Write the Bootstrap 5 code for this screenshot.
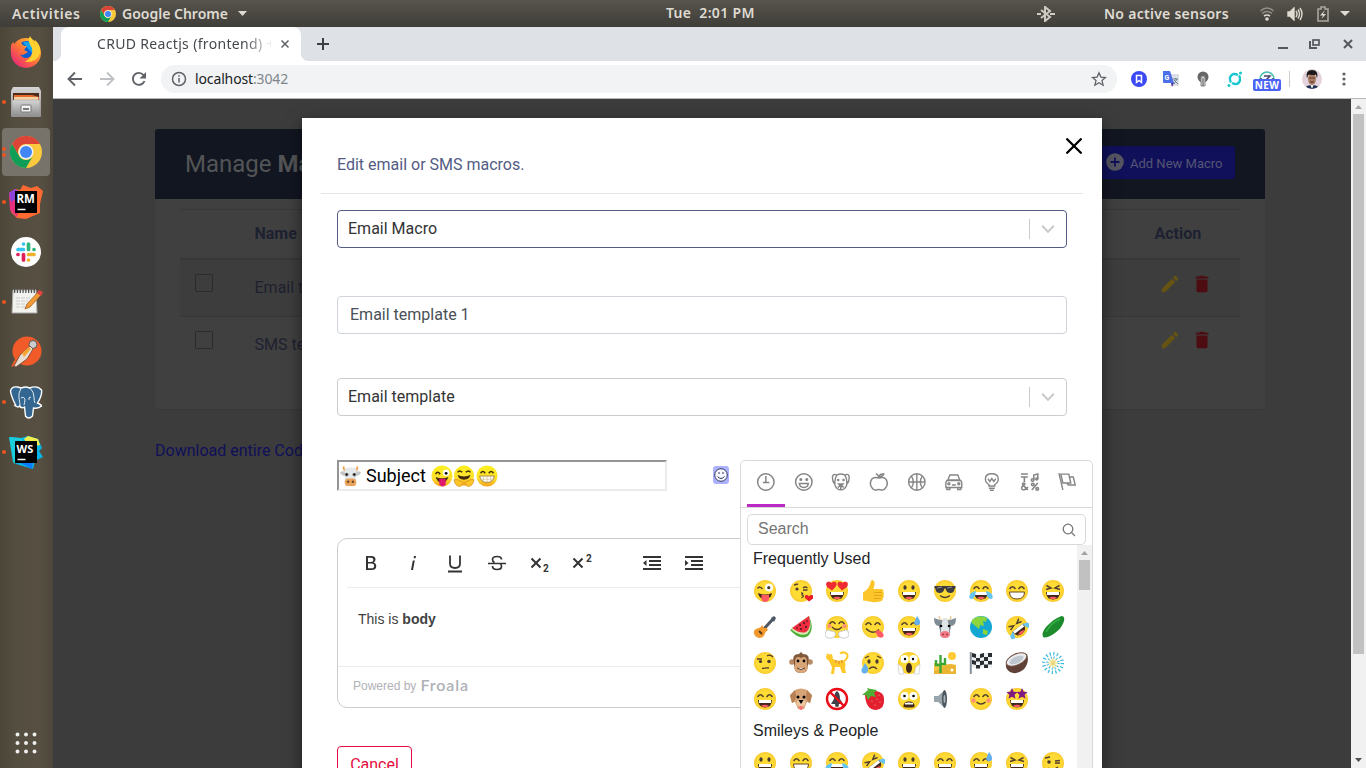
<!DOCTYPE html>
<html lang="en">
<head>
<meta charset="utf-8">
<meta name="viewport" content="width=device-width, initial-scale=1">
<title>CRUD Reactjs (frontend)</title>
<link href="https://cdn.jsdelivr.net/npm/bootstrap@5.3.0/dist/css/bootstrap.min.css" rel="stylesheet">
<style>
html,body{height:768px;overflow:hidden}
body{width:1366px;font-family:Roboto,"Liberation Sans",sans-serif;font-size:16px;line-height:24px}
svg{display:block;flex:none}
/* desktop bar */
.topbar{height:27px;background:linear-gradient(#57544c,#3f3d38);color:#dfdbd2;font:600 14px/27px "Noto Sans",sans-serif;padding-right:16px}
.topbar span{white-space:nowrap}
.topbar .clock{left:666px;top:-1px;letter-spacing:.33px}
/* dock */
.dock{width:53px;background:linear-gradient(90deg,#4b4639,#544e40 30%,#564f42 75%,#4d473b);padding-right:1px}
.dock-item{height:50px;flex:none}
.dock-item.current::before{content:"";position:absolute;left:2px;top:1px;width:48px;height:48px;border-radius:4px;background:#77736a}
.dock-item svg{position:relative}
.pip{position:absolute;left:2px;top:23px;width:4px;height:4px;border-radius:2px;background:#e95420}
.pip.two{top:20px;box-shadow:0 6px #e95420}
/* browser frame */
.tabstrip{height:34px;background:#dee1e6;padding-left:8px;font-family:"Noto Sans",sans-serif}
.browser-tab{width:240px;background:#fff;border-radius:8px 8px 0 0;padding-left:36px}
.browser-tab::before,.browser-tab::after{content:"";position:absolute;bottom:0;width:8px;height:8px}
.browser-tab::before{left:-8px;background:radial-gradient(circle at 0 0,transparent 8px,#fff 8.5px)}
.browser-tab::after{right:-8px;background:radial-gradient(circle at 100% 0,transparent 8px,#fff 8.5px)}
.tab-title{width:176px;font-size:14px;letter-spacing:.33px;color:#45484c;white-space:nowrap;overflow:hidden;-webkit-mask-image:linear-gradient(90deg,#000 84%,transparent)}
.toolbar{height:38px;border-bottom:1px solid #b6b8b8;background:#fff;padding:0 0 1px 14px}
.omnibox{width:956px;height:28px;border-radius:14px;background:#f1f3f4;font:14px/28px "Noto Sans",sans-serif;letter-spacing:-.13px;color:#202124;padding:0 10px}
.omnibox .port{color:#80868b}
.ext{width:32px}
.newtag{left:-6px;top:8px;width:28px;height:12px;border-radius:2px;background:#4a63f5;color:#fff;font:700 10px/12px "Noto Sans",sans-serif;letter-spacing:.3px;text-align:center}
/* dimmed page */
.page{background:#3c3c3c;color:#1d2130}
.sheet{width:1110px;height:280px;margin:30px 0 0 102px;background:#404040;border-radius:3px;overflow:hidden;box-shadow:0 1px 1px #383838}
.sheet-head{height:70px;background:#121621;color:#535456;font-size:24px;padding:0 30px}
.add-btn{width:140px;height:33px;background:#10105a;border-radius:2px;color:#555575;font-size:13px;padding-left:11px;gap:6px;margin-top:-4px}
.macro-rows{margin:10px 25px 0;border-top:1px solid #383838}
.macro-row{height:57px;border-bottom:1px solid #373737}
.macro-row:last-child{border:0}
.macro-row:last-child>div{margin-top:-2px}
.macro-row.odd{background:#3d3d3d}
.macro-row.heads{height:50px;border-bottom:2px solid #373737;font-weight:700}
.c-check{width:74.5px;padding-left:15px}
.c-act{width:85.5px}
.tick{width:18px;height:18px;border:1px solid #2b2b2b;border-radius:2px;margin-top:-10px}
.pens{padding:0 0 9px 4px;gap:10px}
.dl{margin:30px 0 0 102px;color:#10105a}
.vscroll{width:15px;background:#f1f1f1}
.vscroll .thumb{width:11px;background:#c1c1c1}
/* dialog */
.dialog-box{left:249px;top:19px;width:800px;height:660px;background:#fff;box-shadow:0 5px 15px rgba(0,0,0,.5);padding:0 35px}
.dialog-top{height:76px;margin:0 -16px;padding:0 16px;border-bottom:1px solid #e5e5e5;color:#535b85}
.field{height:38px;border:1px solid #ccc;border-radius:4px;padding-left:10px;color:#333;background:#fff}
.field.focused{border-color:#535b85}
.field.plain{border-color:#ced4da;color:#495057;padding-left:12px}
.field .sep{width:1px;height:20px;background:#ccc}
.subject{width:330px;height:31px;border:2px solid;border-color:#949494 #ebebeb #ebebeb #949494;font-size:18px;color:#000;padding-left:1px}
.picker-btn{width:16px;height:18px;background:#adb2ff;border-radius:3px;margin:-2px 0 0 46px}
.editor{height:170px;border:1px solid #ccc;border-radius:10px;margin-top:47px}
.ed-tools{height:49px;border-bottom:1px solid #ececec;margin:0 9px;padding-left:3px;color:#333}
.ed-tools svg{width:42px;height:24px}
.ed-body{height:79px;border-bottom:1px solid #ececec;font:14px/20px "Liberation Sans",sans-serif;color:#414141;padding:21px 20px}
.ed-foot{padding:5px 15px;color:#b0b1b7;font:12px/28px "Liberation Sans",sans-serif}
.froala{font:600 16px/26px Lato,sans-serif;letter-spacing:.9px}
.cancel{width:75px;height:38px;border:1px solid #e60b41;border-radius:4px;color:#e60b41;margin-top:38px;padding-top:6px;text-align:center}
/* emoji picker */
.picker{left:438px;top:342px;width:353px;height:340px;background:#fff;border:1px solid #d9d9d9;border-radius:5px;font-family:"Liberation Sans",sans-serif;color:#222427}
.anchors{height:47px;border-bottom:1px solid #d9d9d9;padding:0 6px;color:#858585}
.anchors svg{width:37.66px;height:42px}
.anchors .bar{left:6px;top:43px;width:38px;height:3px;background:#bb2ac5}
.find{height:31px;margin:6px 6px 0;border:1px solid #d9d9d9;border-radius:5px;padding:0 8px 1px 10px;color:#757575}
.emoji-grid{width:330px;padding-left:6px;line-height:20px}
.cat-name{height:28px;padding:4px 0 0 6px;font-size:16px}
.cells{display:grid;grid-template-columns:repeat(9,36px);grid-auto-rows:36px;place-items:center}
.cells svg{width:24px;height:24px}
</style>
</head>
<body class="d-flex flex-column">

<svg width="0" height="0" class="position-absolute">
<defs>
<radialGradient id="gy"><stop offset=".7" stop-color="#ffdb36"/><stop offset="1" stop-color="#f8cb2e"/></radialGradient>
<linearGradient id="gn" x2="0" y2="1"><stop stop-color="#fdf01a"/><stop offset=".6" stop-color="#fde030"/><stop offset="1" stop-color="#f5a11c"/></linearGradient>
<linearGradient id="gf" x1="1" x2="0" y2="1"><stop stop-color="#ffe226"/><stop offset=".5" stop-color="#ff7139"/><stop offset="1" stop-color="#e31587"/></linearGradient>
<linearGradient id="gg" x2="0" y2="1"><stop stop-color="#d5d5d5"/><stop offset="1" stop-color="#8f8f8f"/></linearGradient>
<symbol id="face" viewBox="0 0 24 24"><circle cx="12" cy="12" r="11" fill="url(#gy)"/></symbol>
<symbol id="dots" viewBox="0 0 24 24"><g fill="#4a3b2e"><ellipse cx="8" cy="8.500" rx="1.600" ry="2.200"/><ellipse cx="16" cy="8.500" rx="1.600" ry="2.200"/></g></symbol>
<symbol id="arcs" viewBox="0 0 24 24"><path d="M5 9.500q2.500-3.500 5 0M14 9.500q2.500-3.500 5 0" fill="none" stroke="#54402c" stroke-width="1.600" stroke-linecap="round"/></symbol>
<symbol id="grin" viewBox="0 0 24 24"><path d="M5 13h14q-.3 7.500-7 7.500T5 13z" fill="#40281c"/><path d="M6 13h12v3H6z" fill="#fff"/><path d="M8 18.800q4-2.200 8 0-4 3-8 0z" fill="#ff5a62"/></symbol>
<symbol id="e-grin" viewBox="0 0 24 24"><use href="#face"/><use href="#dots"/><use href="#grin"/></symbol>
<symbol id="e-smile" viewBox="0 0 24 24"><use href="#face"/><use href="#arcs"/><use href="#grin"/></symbol>
<symbol id="e-teeth" viewBox="0 0 24 24"><use href="#face"/><use href="#arcs"/><path d="M4.500 13h15q0 7-7.500 7t-7.500-7z" fill="#fff" stroke="#6b481f"/></symbol>
<symbol id="squint" viewBox="0 0 24 24"><path d="M5.500 6.500l4.500 2.500-5 1.500M18.500 6.500L14 9l5 1.500" fill="none" stroke="#54402c" stroke-width="1.500"/></symbol>
<symbol id="e-xd" viewBox="0 0 24 24"><use href="#face"/><use href="#squint"/><use href="#grin"/></symbol>
<symbol id="e-sweat" viewBox="0 0 24 24"><use href="#face"/><use href="#arcs"/><use href="#grin"/><path d="M20 1q4 5 3 7.500t-4 1.500q-3-1-1-4.500z" fill="#65b1ef"/></symbol>
<symbol id="e-joy" viewBox="0 0 24 24"><use href="#face"/><use href="#arcs"/><use href="#grin"/><path d="M7 12q-1 8-4.500 8T1 15.500Q2.500 13 7 12zM17 12q1 8 4.500 8t1.500-4.500Q21.500 13 17 12z" fill="#65c5f2"/></symbol>
<symbol id="e-rofl" viewBox="0 0 24 24"><g transform="rotate(-38 12 12)"><use href="#face"/><use href="#squint"/><use href="#grin"/><path d="M6 13q-1 7-4 7t-1-5zM18 13q1 7 4 7t1-5z" fill="#65c5f2"/></g></symbol>
<symbol id="e-zany" viewBox="0 0 24 24"><use href="#face"/><path d="M4.500 9.500q2.500-3 5 .5" fill="none" stroke="#54402c" stroke-width="1.500"/><circle cx="16" cy="8.500" r="4" fill="#fff"/><circle cx="15.800" cy="8.700" r="1.600" fill="#4a3b2e"/><path d="M5 14q7 3 14 0-1 6-7 6t-7-6z" fill="#40281c"/><path d="M8.500 15.500q4 1 7.500 0v4.500q-.5 3-4 3t-3.500-3z" fill="#ff5a62"/></symbol>
<symbol id="e-kiss" viewBox="0 0 24 24"><use href="#face"/><circle cx="8" cy="10" r="1.600" fill="#4a3b2e"/><path d="M5 6l4-1M14 9q2-2 4.500 0M14 11h4.500M12 14q3 0 1 2 3 1-.5 3" fill="none" stroke="#54402c" stroke-width="1.300"/><path d="M20 22.500l-4-3.500q-1-3.500 2-3 1.500.3 2 1.500 1-2 3-1.500t1 3.500z" fill="#e81b26"/></symbol>
<symbol id="e-love" viewBox="0 0 24 24"><use href="#face"/><use href="#grin"/><g fill="#ee2b33"><path d="M7 11.500L2 8Q-.5 3.500 3.500 2.500q2 0 3 1.500Q8 2 10.500 3q2.500 2-.5 5.500z"/><path d="M17 11.500L22 8Q24.500 3.500 20.500 2.500q-2 0-3 1.500Q16 2 13.500 3q-2.500 2 .5 5.500z"/></g></symbol>
<symbol id="e-thumb" viewBox="0 0 24 24"><path d="M2 13q6-2 8-11 1-2 3 0 1.500 2-.5 8h8q3 .5 1.500 3 2 1.500.500 3 1 2-.500 3 0 3-3 3.500-7 1.500-13-.500l-4-.500z" fill="#fcc62b"/><path d="M13 13.500h8M13 16.500h8M13 19.500h7" stroke="#dd9f17" stroke-width=".8"/></symbol>
<symbol id="e-cool" viewBox="0 0 24 24"><use href="#face"/><path d="M1.500 7h21v2l-1 1q-.5 4-4 4-4 0-5-4.500h-1Q10.500 14 6.500 14q-3.500 0-4-4l-1-1z" fill="#3b3b40"/><path d="M4 9l5-1M14 9l5-1" stroke="#8c8c92"/><path d="M7 16.500q5 4 10 0" fill="none" stroke="#54402c" stroke-width="1.400"/></symbol>
<symbol id="e-guitar" viewBox="0 0 24 24"><path d="M10 15L20 4" stroke="#4e5964" stroke-width="3"/><path d="M18 3l3-2 2 2-2 4z" fill="#4e5964"/><path d="M9 10q-1 3-5 3.500Q0 15 1 19q2 4 6 4 4-.5 5-4.500 0-2 3-3.500-1-3-4-2z" fill="#f29a2e"/><path d="M6 16l3 3" stroke="#5a3a1a" stroke-width="2"/></symbol>
<symbol id="e-melon" viewBox="0 0 24 24"><path d="M20 1q6 13-1 20-8 5-18-6z" fill="#4caf3a"/><path d="M20 1q4 13-2 18-7 3-16-5z" fill="#d8eab0"/><path d="M20 1q3 12-3 16-6 2-14-4z" fill="#ef2c40"/><g fill="#3b1a1a"><circle cx="11" cy="10" r="1"/><circle cx="15" cy="8" r="1"/><circle cx="17" cy="12" r="1"/><circle cx="12" cy="14" r="1"/><circle cx="18" cy="6" r=".8"/><circle cx="8" cy="13" r=".8"/></g></symbol>
<symbol id="e-hug" viewBox="0 0 24 24"><use href="#face"/><use href="#arcs" y="-1"/><path d="M7 12q5 5 10 0" fill="none" stroke="#54402c" stroke-width="1.400"/><circle cx="4.500" cy="11" r="2" fill="#ff8d7a"/><circle cx="19.500" cy="11" r="2" fill="#ff8d7a"/><g fill="#fff" stroke="#b9c0c4" stroke-width=".8"><path d="M1 16q2-2 5 0 5 0 4.500 4-2 4-7 3T1 16zM23 16q-2-2-5 0-5 0-4.500 4 2 4 7 3t2.500-7z"/></g></symbol>
<symbol id="e-yum" viewBox="0 0 24 24"><use href="#face"/><use href="#arcs"/><path d="M5 13.500q7 7 13 1" fill="none" stroke="#54402c" stroke-width="1.400"/><path d="M14 17q3-3 6-.5 3 2 2.500 5-2 2-5 .5z" fill="#ff5a62"/></symbol>
<symbol id="e-cow" viewBox="0 0 24 24"><path d="M1 3l6 2 10 0 6-2q0 8-5 8l-2 10q-4 4-8 0L6 11Q1 11 1 3z" fill="#7f8b95"/><path d="M10 3h4l2 8v8H8v-8z" fill="#dfe4e7"/><path d="M6.500 1q-1 3 2 4M17.500 1q1 3-2 4" fill="none" stroke="#e8ca9a" stroke-width="1.500"/><circle cx="8" cy="11" r="1.300"/><circle cx="16" cy="11" r="1.300"/><ellipse cx="12" cy="19.500" rx="5" ry="3.500" fill="#f47b86"/><circle cx="10" cy="19.500" r="1" fill="#a23a50"/><circle cx="14" cy="19.500" r="1" fill="#a23a50"/></symbol>
<symbol id="e-globe" viewBox="0 0 24 24"><circle cx="12" cy="12" r="11" fill="#14a7d1"/><path d="M4 4q7-5 14-1l-1 4-3-1 1 5-4-1-1 4-6-5Q1 7 4 4zM14 14l5 2-1 4-4-1zM17 9l2 3" fill="#8bd63c"/></symbol>
<symbol id="e-cuke" viewBox="0 0 24 24"><path d="M20.500 1q3.500 0 2.500 5-2 7-9 12T2.500 22.500Q-.5 18 6 11 14 3 20.500 1z" fill="#1d8a2e"/><path d="M19 4Q10 8 5 17" stroke="#35b044" stroke-width="1.500" fill="none"/></symbol>
<symbol id="e-brow" viewBox="0 0 24 24"><use href="#face"/><path d="M4 8h5M14 5q3-2 6 1M9 17.500q4-1 7-.5" fill="none" stroke="#54402c" stroke-width="1.300"/><circle cx="7.500" cy="10.500" r="1.600" fill="#4a3b2e"/><circle cx="16" cy="10.500" r="1.800" fill="#4a3b2e"/></symbol>
<symbol id="e-monkey" viewBox="0 0 24 24"><circle cx="3" cy="11" r="2.800" fill="#b98a63"/><circle cx="21" cy="11" r="2.800" fill="#b98a63"/><path d="M5 12Q2 3 10 3l2-2 2 2q8 0 5 9 1 10-7 10T5 12z" fill="#80593d"/><path d="M12 7q5-3 6 3-1 3 1 6-1 6-7 6t-7-6q2-3 1-6 1-6 6-3z" fill="#d9a67a"/><circle cx="9" cy="10" r="1.400"/><circle cx="15" cy="10" r="1.400"/><path d="M8 17q4 3 8 0" stroke="#53331f" fill="#fff"/></symbol>
<symbol id="e-cat" viewBox="0 0 24 24"><path d="M2 2l2 1.500 3-.5 1 5q5 3 9 1l3 2q1 3 0 6l1 5h-4l-2-6-5 0-1 7H6l1-7-3-6-3-3z" fill="#ffc92c"/><path d="M18 11q6-4 4-8-3-3-7-.5" fill="none" stroke="#ffc92c" stroke-width="2"/><path d="M11 9v3M14 10v3M17 9v3" stroke="#df7e25"/></symbol>
<symbol id="e-sad" viewBox="0 0 24 24"><use href="#face"/><use href="#dots" y="2"/><path d="M4 7l4-2M20 7l-4-2M8 18q4-4 8 0" fill="none" stroke="#54402c" stroke-width="1.300"/><path d="M4 12q4 5 3 8t-4 2.500-2.500-4z" fill="#65b1ef"/></symbol>
<symbol id="e-scream" viewBox="0 0 24 24"><use href="#face"/><circle cx="7.500" cy="8" r="4" fill="#fff"/><circle cx="16.500" cy="8" r="4" fill="#fff"/><circle cx="8" cy="8" r="1.200"/><circle cx="16" cy="8" r="1.200"/><ellipse cx="12" cy="17" rx="3" ry="5" fill="#40281c"/><path d="M1 13l4 3 2 7H2zM23 13l-4 3-2 7h5z" fill="#fff" stroke="#c5cbd0" stroke-width=".7"/></symbol>
<symbol id="e-desert" viewBox="0 0 24 24"><path d="M1 12l22 2v9H1z" fill="#f6c644"/><path d="M10 16l7-3 6 1v9H1v-3z" fill="#e9b532"/><circle cx="19" cy="5" r="4" fill="#ffcb33"/><path d="M7.500 22V4M3 9v5h4M12 7v6H8" stroke="#3ba735" stroke-width="2.400" fill="none"/><circle cx="19" cy="19" r="1.500" fill="#fff"/></symbol>
<symbol id="e-flag" viewBox="0 0 24 24"><path d="M1.800 1v22" stroke="#87919a" stroke-width="2"/><path d="M3 2q7 3 10 1t10 0v14q-7-2-10 0T3 16z" fill="#eef1f2"/><g fill="#292c30"><path d="M3 2l4 1v4L3 6zM11 3l4-1v4l-4 1zM19 2h4v4h-4zM7 7l4 0v3.500H7zM15 6l4 0v4h-4zM3 9l4 1v4l-4-1zM11 10l4-.5v4l-4 1zM19 10h4v3.500h-4zM7 14l4 0v3.500H7zM15 13.500h4V17h-4z"/></g></symbol>
<symbol id="e-coco" viewBox="0 0 24 24"><path d="M1 13Q8 2 22 3q3 9-4 16-7 5-13 2-5-3-4-8z" fill="#5f4138"/><ellipse cx="11.500" cy="8.500" rx="11" ry="5.500" transform="rotate(-25 11.500 8.500)" fill="#e8eaee" stroke="#745244"/><ellipse cx="11.500" cy="9" rx="7.500" ry="3.300" transform="rotate(-25 11.500 9)" fill="#bec6ce"/></symbol>
<symbol id="e-spark" viewBox="0 0 24 24"><g fill="none" stroke="#3bbbdd"><circle cx="12" cy="12" r="9.300" stroke-width="3.400" stroke-dasharray="1.200 2.450"/><circle cx="12" cy="12" r="5.500" stroke-width="2.400" stroke-dasharray="1 1.880"/></g><path d="M12 7v10M7 12h10M8.500 8.500l7 7M15.500 8.500l-7 7" stroke="#ead877" stroke-width="1.200"/></symbol>
<symbol id="e-dog" viewBox="0 0 24 24"><path d="M6 3q6-3 12 0l5 6-2 7-3-1-3 7H9l-3-7-3 1-2-7z" fill="#d6a477"/><path d="M6 3L1 8l2 8q4-2 4-8zM18 3l5 5-2 8q-4-2-4-8z" fill="#b78055"/><circle cx="9" cy="10" r="1.500"/><circle cx="15" cy="10" r="1.500"/><ellipse cx="12" cy="16" rx="4.500" ry="3.500" fill="#ebc6a1"/><path d="M9.500 13h5L12 17z"/><ellipse cx="12" cy="21" rx="2" ry="2" fill="#ff6f75"/></symbol>
<symbol id="e-mute" viewBox="0 0 24 24"><circle cx="12" cy="12" r="10" fill="#fff" stroke="#e90d18" stroke-width="2.400"/><path d="M12 4q3 2 3 8l3 5H6l3-5q0-6 3-8z" fill="#3f4347"/><circle cx="12" cy="18" r="2" fill="#3f4347"/><path d="M5 5l14 14" stroke="#e90d18" stroke-width="2.400"/></symbol>
<symbol id="e-berry" viewBox="0 0 24 24"><path d="M4 8q4-6 11-4 8 1 8 8 1 10-8 11Q5 23 4 8z" fill="#e3202f"/><path d="M1 8l6-5-1-2 4 1 6 1-3 3 2 4-5-1-3 4-2-5z" fill="#4fae35"/><g fill="#ffb4a5"><circle cx="11" cy="14" r=".6"/><circle cx="16" cy="12" r=".6"/><circle cx="14" cy="18" r=".6"/><circle cx="19" cy="15" r=".6"/><circle cx="18" cy="8" r=".6"/></g></symbol>
<symbol id="e-grim" viewBox="0 0 24 24"><use href="#face"/><circle cx="7.500" cy="9" r="4" fill="#fff"/><circle cx="16.500" cy="9" r="4" fill="#fff"/><circle cx="7.500" cy="9" r="1.300"/><circle cx="16.500" cy="9" r="1.300"/><path d="M6.500 20q-.5-5.500 5.500-5.500t5.500 5.500q-5.500 1-11 0z" fill="#40281c"/><path d="M8 16q4-1 8 0v1.500H8z" fill="#fff"/></symbol>
<symbol id="e-speak" viewBox="0 0 24 24"><path d="M1 9h4l7-6v18l-7-6H1z" fill="#98a5ad"/><ellipse cx="11.500" cy="12" rx="2.500" ry="9" fill="#4d565e"/><ellipse cx="11.500" cy="12" rx="1" ry="4" fill="#aab4bb"/></symbol>
<symbol id="e-blush" viewBox="0 0 24 24"><use href="#face"/><use href="#arcs"/><circle cx="4.500" cy="13.500" r="2.200" fill="#ff9075"/><circle cx="19.500" cy="13.500" r="2.200" fill="#ff9075"/><path d="M7.500 15q4.500 4 9 0" fill="none" stroke="#54402c" stroke-width="1.500"/></symbol>
<symbol id="e-star" viewBox="0 0 24 24"><use href="#face"/><use href="#grin"/><path id="st" d="M7 1l1.600 3.700 4 .3-3 2.700.9 4L7 9.700l-3.500 2 .9-4-3-2.700 4-.3z" fill="#801a83"/><use href="#st" x="10"/></symbol>
<symbol id="e-wink" viewBox="0 0 24 24"><use href="#face"/><circle cx="8" cy="11" r="1.800" fill="#4a3b2e"/><path d="M4 7l5-1M14 10l5-.5M14 12h5M7 17q5 3 10-1" fill="none" stroke="#54402c" stroke-width="1.300"/></symbol>
<symbol id="i-chrome" viewBox="0 0 32 32"><circle cx="16" cy="16" r="16" fill="#fbc93d"/><path d="M2.100 8A16 16 0 0 1 29.900 8H16a8 8 0 0 0-7 12z" fill="#db4437"/><path d="M2.100 8l7 12A8 8 0 0 0 22.900 20L16 32A16 16 0 0 1 2.100 8z" fill="#0f9d58"/><circle cx="16" cy="16" r="7.500" fill="#f1f1f1"/><circle cx="16" cy="16" r="6" fill="#4285f4"/></symbol>
<symbol id="i-pencil" viewBox="0 0 24 24"><path d="M3 17.250V21h3.750L17.810 9.940l-3.750-3.750L3 17.250zM20.710 7.040a1 1 0 0 0 0-1.410l-2.340-2.340a1 1 0 0 0-1.410 0l-1.830 1.830 3.750 3.750 1.830-1.830z"/></symbol>
<symbol id="i-bin" viewBox="0 0 24 24"><path d="M6 19a2 2 0 0 0 2 2h8a2 2 0 0 0 2-2V7H6v12zM19 4h-3.500l-1-1h-5l-1 1H5v2h14V4z"/></symbol>
<symbol id="i-down" viewBox="0 0 20 20"><path d="M4.800 7.500L10 12.700l5.200-5.200" fill="none" stroke="#ccc" stroke-width="2.200" stroke-linecap="round"/></symbol>
</defs>
</svg>

<header class="topbar d-flex align-items-center position-relative flex-shrink-0">
  <span style="margin-left:12px;width:68px;letter-spacing:.62px">Activities</span>
  <svg width="16" height="16" style="margin-left:20px"><use href="#i-chrome"/></svg>
  <span style="margin-left:6px;width:111px">Google Chrome</span>
  <svg width="9" height="5" style="margin-left:5px"><path d="M0 0h9L4.500 5z" fill="#dfdbd2"/></svg>
  <span class="clock position-absolute">Tue&nbsp; 2:01 PM</span>
  <svg width="18" height="16" class="ms-auto" viewBox="0 0 18 16" fill="none" stroke="#cfcbc3" stroke-width="2"><path d="M4 4l9 7-5 4V1l5 4-9 7M0 8h4M13 8h5"/></svg>
  <span style="margin-left:49px;width:126px;letter-spacing:.27px">No active sensors</span>
  <svg width="16" height="14" style="margin-left:29px" viewBox="0 0 16 14" fill="none" stroke-width="1.600"><path d="M1.500 4Q8-2 14.500 4M3 6.500q5-4 10 0" stroke="#918e87"/><path d="M5 9q3-2 6 0" stroke="#dfdbd2"/><circle cx="8" cy="12" r="1.800" fill="#dfdbd2"/></svg>
  <svg width="16" height="14" style="margin-left:12px" viewBox="0 0 16 14" fill="none" stroke="#dfdbd2" stroke-width="1.400"><path d="M1 5h2l4-4v12L3 9H1z" fill="#dfdbd2"/><path d="M9 4q2 3 0 6M11 2.500q3 4.500 0 9M13 1q4 6 0 12"/></svg>
  <svg width="12" height="16" style="margin-left:14px" viewBox="0 0 12 16"><path d="M4 1h4v2h3v12H1V3h3z" fill="none" stroke="#aaa69e" stroke-width="1.600"/><path d="M8 4L3 9.500h3L4.500 13 9 8H6z" fill="#dfdbd2"/></svg>
  <svg width="10" height="5" style="margin-left:11px"><path d="M0 0h10L5 5z" fill="#dfdbd2"/></svg>
</header>

<div class="d-flex flex-grow-1">
  <nav class="dock d-flex flex-column position-relative">
    <div class="dock-item position-relative d-flex align-items-center justify-content-center">
      <svg width="32" height="32" viewBox="0 0 32 32"><circle cx="16" cy="17" r="15" fill="url(#gf)"/><circle cx="16.500" cy="14.500" r="9.500" fill="#0a5ed0"/><path d="M13 7q4-3 9 1 3 4 0 9z" fill="#10a4f0"/><path d="M1 9q-1 8 2 13 4 9 13 9 14-1 14-15l-8 2q-2 4-6 4-4 0-6-4 2 2 5 0l3-2-4-2 3-4q-4 0-5-2L9 4Q6 7 5 9L3 6z" fill="url(#gf)"/><path d="M20 0q-3 5 2 12 2 9-7 14 12 1 15-9 1-8-5-13v4z" fill="#ffd030"/></svg>
    </div>
    <div class="dock-item position-relative d-flex align-items-center justify-content-center"><i class="pip"></i>
      <svg width="32" height="32" viewBox="0 0 32 32"><path d="M3 1h26l2 4v25q0 1-1 1H2q-1 0-1-1V5z" fill="url(#gg)"/><path d="M3 7h26v7H3z" fill="#4d2b1c"/><path d="M4 9h18l7 2v4H4z" fill="#e36b2f"/><path d="M4 11h24v3H4z" fill="#f4d3a4"/><path d="M2 14h28v16H2z" fill="url(#gg)" stroke="#999" stroke-width=".5"/><rect x="11" y="19" width="10" height="7" rx="1" fill="#f3f3f3" stroke="#777"/><path d="M13 23h6" stroke="#777" stroke-width="2"/></svg>
    </div>
    <div class="dock-item current position-relative d-flex align-items-center justify-content-center"><i class="pip two"></i>
      <svg width="32" height="32"><use href="#i-chrome"/></svg>
    </div>
    <div class="dock-item position-relative d-flex align-items-center justify-content-center"><i class="pip"></i>
      <svg width="34" height="34" viewBox="0 0 34 34"><path d="M0 8l6-4 5 1 3-5 8 3 6-2 6 5-3 13 0 9-14 6-9-1-6-6z" fill="#ff6a33"/><path d="M0 8l6-4 6 6-4 22-7-7z" fill="#e8307f"/><path d="M0 8l6-4 8 5-12 8z" fill="#8b43d9"/><rect x="6" y="6" width="22" height="22" fill="#000"/><text x="7.500" y="18" font-family="Open Sans" font-weight="700" font-size="11.500" fill="#fff">RM</text><path d="M8.500 24.500h8" stroke="#fff" stroke-width="1.500"/></svg>
    </div>
    <div class="dock-item position-relative d-flex align-items-center justify-content-center">
      <svg width="30" height="30" viewBox="0 0 30 30"><circle cx="15" cy="15" r="15" fill="#fff"/><g stroke-width="3.700" stroke-linecap="round"><path d="M12.500 7v0M7 12.500h5.500" stroke="#36c5f0"/><path d="M17.500 7v5.500M23 12.500v0" stroke="#2eb67d"/><path d="M17.500 17.500H23M17.500 23v0" stroke="#ecb22e"/><path d="M12.500 17.500V23M7 17.500v0" stroke="#e01e5a"/></g></svg>
    </div>
    <div class="dock-item position-relative d-flex align-items-center justify-content-center"><i class="pip"></i>
      <svg width="34" height="30" viewBox="0 0 34 30"><path d="M4 3h23l1 23H3z" fill="#f2f2ee" stroke="#aaa"/><path d="M5 4h21" stroke="#555" stroke-width="4" stroke-dasharray="1.300 1.500"/><path d="M7 11h15M7 14h12M7 17h9M7 20h9" stroke="#ccc" stroke-dasharray="4 1"/><path d="M16 22l2-5L30 4l3 3-12 13z" fill="#f39a35" stroke="#9c5417" stroke-width=".7"/><path d="M28 6l2-3 4 2-2 4z" fill="#df4343"/></svg>
    </div>
    <div class="dock-item position-relative d-flex align-items-center justify-content-center">
      <svg width="32" height="32" viewBox="0 0 32 32"><circle cx="17" cy="15" r="14.500" fill="#f15a29"/><path d="M1 31l4-8 5 5z" fill="#f15a29"/><circle cx="23" cy="8.500" r="4" fill="#ccc" stroke="#555" stroke-width="1"/><path d="M20 10l3 3-6 10-11 8-2-1 6-11z" fill="#e8ddcf" stroke="#714633" stroke-width=".8"/><path d="M12 17l7-6 2 2-7 8z" fill="#f5a430"/></svg>
    </div>
    <div class="dock-item position-relative d-flex align-items-center justify-content-center"><i class="pip"></i>
      <svg width="34" height="34" viewBox="0 0 34 34"><path d="M7 21Q2 11 1.500 6q1-5 7-4l4 1q4-2 8 0 8-3 12 2 1 5-4 13 4 2 4 3-3 3-8 2l-1 8q-4 4-7 0l-1-9q-3 2-5-1-1 2-4 0z" fill="#336791" stroke="#fff" stroke-width="1.400"/><path d="M12 3q-3 6-2 10 1 5 1 8M21 3q4 4 4 9 0 4 1 6M12 13q3-2 4 1 0 3-1 6M22 12q-3 0-2 3" fill="none" stroke="#dfe8ee" stroke-width="1"/></svg>
    </div>
    <div class="dock-item position-relative d-flex align-items-center justify-content-center"><i class="pip"></i>
      <svg width="34" height="34" viewBox="0 0 34 34"><path d="M0 2l12 1 7-2 10 3 4 9-3 3 4 6-8 4-2 8-17-5z" fill="#07b6e8"/><path d="M15 4l4-3 10 3 2 6-10 2z" fill="#f3ee4d"/><path d="M0 2l12 1 4 6-10 20-2-2z" fill="#1acddd"/><path d="M8 26l16 1-1 7z" fill="#087cfa"/><rect x="6" y="6" width="22" height="22" fill="#000"/><text x="7.500" y="18" font-family="Open Sans" font-weight="700" font-size="11" fill="#fff">WS</text><path d="M8.500 24.500h8" stroke="#fff" stroke-width="1.500"/></svg>
    </div>
    <svg width="22" height="22" viewBox="0 0 22 22" class="mt-auto mx-auto" style="margin-bottom:14px" stroke="#eee" stroke-width="4" stroke-linecap="round"><path d="M2.500 2.500v0M11 2.500v0M19.500 2.500v0M2.500 11v0M11 11v0M19.500 11v0M2.500 19.500v0M11 19.500v0M19.500 19.500v0"/></svg>
  </nav>

  <main class="d-flex flex-column flex-grow-1">
    <div class="tabstrip d-flex">
      <div class="browser-tab d-flex align-items-center position-relative">
        <div class="tab-title">CRUD Reactjs (frontend) +</div>
        <svg width="8" height="8" class="ms-auto" style="margin-right:12px" stroke="#5f6368" stroke-width="1.500"><path d="M.5.500l7 7M7.500.500l-7 7"/></svg>
      </div>
      <svg width="12" height="12" style="margin:11px 0 0 16px" stroke="#3c4043" stroke-width="2"><path d="M0 6h12M6 0v12"/></svg>
      <svg width="76" height="12" viewBox="0 0 76 12" class="ms-auto" style="margin:11px 13px 0 0" fill="none" stroke="#55585d" stroke-width="2"><path d="M1 10h10M33 3v7h7"/><rect x="36" y="2" width="6" height="5" stroke-width="1.700"/><path d="M67 2l8 8M75 2l-8 8"/></svg>
    </div>
    <div class="toolbar d-flex align-items-center flex-shrink-0">
      <svg width="16" height="16" viewBox="0 0 16 16" fill="none" stroke="#5f6368" stroke-width="1.900"><path d="M15 8H2M8 1.500L1.500 8 8 14.500"/></svg>
      <svg width="16" height="16" viewBox="0 0 16 16" style="margin-left:16px" fill="none" stroke="#bdc1c6" stroke-width="1.900"><path d="M1 8h13M8 1.500L14.500 8 8 14.500"/></svg>
      <svg width="16" height="16" viewBox="0 0 16 16" style="margin-left:16px" fill="none" stroke="#5f6368" stroke-width="1.900"><path d="M13.500 10A6 6 0 1 1 12.500 4L14 5.500"/><path d="M15 1v6.500H8.500z" fill="#5f6368" stroke="none"/></svg>
      <div class="omnibox d-flex align-items-center" style="margin-left:14px">
        <svg width="16" height="16" fill="none" stroke="#5f6368" stroke-width="1.500"><circle cx="8" cy="8" r="6.500"/><path d="M8 7v4.500M8 4.300v1.500"/></svg>
        <span style="margin-left:8px">localhost<span class="port">:3042</span></span>
        <svg width="16" height="16" viewBox="0 0 16 16" class="ms-auto" fill="none" stroke="#5f6368" stroke-width="1.300"><path d="M8 1.800l1.900 4.300 4.600.4L11 9.600l1.100 4.600L8 11.700l-4.100 2.500L5 9.600 1.500 6.500l4.600-.4z"/></svg>
      </div>
      <div class="ext d-flex justify-content-center" style="margin-left:6px"><svg width="16" height="16"><circle cx="8" cy="8" r="8" fill="#3a49f5"/><path d="M5.500 4.500h5v7L8 9.500l-2.500 2z" fill="none" stroke="#fff" stroke-width="1.500"/></svg></div>
      <div class="ext d-flex justify-content-center"><svg width="16" height="16"><path d="M6 3h10v12H8z" fill="#dcdfe4"/><path d="M0 0h7l4 12H1q-1 0-1-1z" fill="#4b6fe8"/><path d="M8 12h3l-2 4z" fill="#5533a0"/><text x="1.500" y="9" font-size="7" font-weight="700" font-family="Roboto" fill="#fff">G</text><path d="M10 8h5M12.500 7v1M11 13l3-5M11 9l4 4" stroke="#668090" fill="none"/></svg></div>
      <div class="ext d-flex justify-content-center"><svg width="14" height="16"><circle cx="7" cy="6" r="5.500" fill="#666"/><path d="M5 15V7q0-2 2-2t2 2v8z" fill="#ddd" stroke="#888"/><path d="M7 7v8" stroke="#555"/></svg></div>
      <div class="ext d-flex justify-content-center"><svg width="16" height="16" fill="none" stroke="#18c7cf" stroke-width="2.400"><path d="M11 4Q5 1 3 6.500q-.5 3 1 5M5 12q6 3 8-2.500.5-3-1-5"/><circle cx="13.500" cy="2" r="1.500" fill="#18c7cf" stroke="none"/><circle cx="2" cy="14.500" r="1.500" fill="#18c7cf" stroke="none"/></svg></div>
      <div class="ext d-flex justify-content-center"><div class="position-relative"><svg width="16" height="16"><circle cx="8" cy="8" r="7" fill="#eefaf8" stroke="#46bfb0" stroke-width="1.500"/><path d="M5 5h6L6 10M2 7v4M14 7v4" fill="none" stroke="#52426b" stroke-width="1.500"/></svg><div class="newtag position-absolute">NEW</div></div></div>
      <div style="width:1px;height:16px;background:#c9cbce;margin-left:6px"></div>
      <svg width="20" height="20" viewBox="0 0 20 20" style="margin-left:12px"><clipPath id="av"><circle cx="10" cy="10" r="10"/></clipPath><g clip-path="url(#av)"><path d="M0 0h20v20H0z" fill="#e4d3dc"/><path d="M2 20q2-4 8-4t8 4z" fill="#20304f"/><path d="M8 15h4l-2 5z" fill="#e8edf5"/><ellipse cx="10" cy="10" rx="4" ry="6" fill="#a97962"/><path d="M5 9.500q-2-8.500 5-8.500t5 8.500l-1-4q-4 1-6 0l-2 .5z" fill="#1c1718"/><path d="M7.500 9h2M10.500 9h2M8.500 13h3" stroke="#3a2320"/></g></svg>
      <svg width="4" height="14" style="margin-left:20px" fill="#5f6368"><circle cx="2" cy="2" r="1.600"/><circle cx="2" cy="7" r="1.600"/><circle cx="2" cy="12" r="1.600"/></svg>
    </div>

    <div class="d-flex flex-grow-1">
      <div class="page flex-grow-1 position-relative overflow-hidden">
        <section class="sheet">
          <div class="sheet-head d-flex align-items-center justify-content-between">
            <span>Manage <b>Macros</b></span>
            <div class="add-btn d-flex align-items-center"><svg width="18" height="18"><circle cx="9" cy="9" r="8.800" fill="#555562"/><path d="M9 4.500v9M4.500 9h9" stroke="#10105a" stroke-width="1.800"/></svg><span class="pt-1" style="line-height:20px">Add New Macro</span></div>
          </div>
          <div class="macro-rows">
            <div class="macro-row heads d-flex align-items-center"><div class="c-check"></div><div class="flex-grow-1">Name</div><div class="c-act">Action</div></div>
            <div class="macro-row odd d-flex align-items-center"><div class="c-check"><div class="tick"></div></div><div class="flex-grow-1">Email template 1</div><div class="c-act pens d-flex"><svg width="22" height="22" fill="#655313"><use href="#i-pencil"/></svg><svg width="22" height="22" fill="#4d0c11"><use href="#i-bin"/></svg></div></div>
            <div class="macro-row d-flex align-items-center"><div class="c-check"><div class="tick"></div></div><div class="flex-grow-1">SMS template</div><div class="c-act pens d-flex"><svg width="22" height="22" fill="#655313"><use href="#i-pencil"/></svg><svg width="22" height="22" fill="#4d0c11"><use href="#i-bin"/></svg></div></div>
          </div>
        </section>
        <div class="dl">Download entire Code</div>

        <div class="dialog-box position-absolute">
          <div class="dialog-top d-flex justify-content-between">
            <span style="padding-top:35px">Edit email or SMS macros.</span>
            <svg width="16" height="16" style="margin:20px -15px 0 0" stroke="#000" stroke-width="2.300" stroke-linecap="round"><path d="M1.200 1.200l13.600 13.600M14.800 1.200L1.200 14.800"/></svg>
          </div>
          <div class="field focused d-flex align-items-center" style="margin-top:16px"><span class="flex-grow-1">Email Macro</span><i class="sep"></i><svg width="20" height="20" style="margin:0 8px"><use href="#i-down"/></svg></div>
          <div class="field plain d-flex align-items-center" style="margin-top:48px">Email template 1</div>
          <div class="field d-flex align-items-center" style="margin-top:44px"><span class="flex-grow-1">Email template</span><i class="sep"></i><svg width="20" height="20" style="margin:0 8px"><use href="#i-down"/></svg></div>
          <div class="d-flex align-items-center" style="margin-top:44px">
            <div class="subject d-flex align-items-center">
              <svg width="21" height="22" viewBox="0 0 22 22"><path d="M4 1q-1 4 3 5M18 1q1 4-3 5" stroke="#eea34b" stroke-width="2" fill="none"/><path d="M0 7q3-2 6 0l0 4q-5 0-6-4zM22 7q-3-2-6 0v4q5 0 6-4z" fill="#c4c7ca"/><path d="M5 3q6-2 12 0v15H5z" fill="#e6e9ea"/><circle cx="7" cy="9.500" r="2" fill="#858585"/><circle cx="15" cy="9.500" r="2" fill="#858585"/><circle cx="7" cy="9.500" r="1"/><circle cx="15" cy="9.500" r="1"/><rect x="5" y="13.500" width="12" height="8" rx="3.500" fill="#e9a55d"/><circle cx="8.500" cy="17" r="1.300" fill="#714823"/><circle cx="13.500" cy="17" r="1.300" fill="#714823"/></svg>
              <span style="margin:0 5px">Subject</span>
              <svg width="22" height="22" viewBox="0 0 24 24"><circle cx="12" cy="12" r="11.500" fill="url(#gn)"/><path d="M5 10q2-4 5 0" stroke="#422b0d" stroke-width="1.700" fill="none"/><circle cx="16.500" cy="8.500" r="3.500" fill="#fff"/><circle cx="16.500" cy="9" r="1.500"/><path d="M5 13q7 3 14 0-2 6-7 6t-7-6z" fill="#422b0d"/><path d="M9 15h7v6q-3 5-7 0z" fill="#e0186c"/></svg>
              <svg width="22" height="22" viewBox="0 0 24 24"><circle cx="12" cy="11.500" r="11" fill="url(#gn)"/><path d="M5 8q2-3 5 0M14 8q3-3 5 0" stroke="#422b0d" stroke-width="1.600" fill="none"/><path d="M5 11q7 3 14 0-1 5-7 5t-7-5z" fill="#422b0d"/><path d="M1 16l4 0 6 3-2 4q-6 2-8-7zM23 16l-4 0-6 3 2 4q6 2 8-7z" fill="#fcc52a" stroke="#d98a14" stroke-width=".7"/></svg>
              <svg width="22" height="22" viewBox="0 0 24 24" style="margin-left:1px"><circle cx="12" cy="12" r="11.500" fill="url(#gn)"/><path d="M5 9q2.500-4 5 0M14 9q2.500-4 5 0" stroke="#422b0d" stroke-width="1.600" fill="none"/><path d="M4 12h16q-1 7-8 7t-8-7z" fill="#fff" stroke="#a98232"/><path d="M4.500 15.500h15M8 12v6M12 12v7M16 12v6" stroke="#c9b98e" stroke-width=".7"/></svg>
            </div>
            <div class="picker-btn"><svg width="16" height="18" fill="none" stroke="#33375c" stroke-width="1"><circle cx="8" cy="9" r="6.300" fill="#f6f6ff"/><path d="M4.500 10.500q3.500 4 7 0M6 6v2M10 6v2"/></svg></div>
          </div>
          <div class="editor">
            <div class="ed-tools d-flex align-items-center">
              <svg viewBox="0 0 42 24"><path d="M16 5h5.500q4 0 4 3.500 0 2-1.800 2.900 2.600.6 2.600 3.500 0 4.100-4.600 4.100H16z M18 11h3q2.400 0 2.400-2.100 0-2.100-2.400-2.100h-3zM18 17.200h3.400q2.700 0 2.700-2.300t-2.700-2.300H18z" fill="#333" fill-rule="evenodd"/></svg>
              <svg viewBox="0 0 42 24"><path d="M20.800 9.500h2L21 19h-2zM22 5h2l-.4 2.200h-2z" fill="#333"/></svg>
              <svg viewBox="0 0 42 24" fill="none" stroke="#333" stroke-width="1.800"><path d="M16 4.500v8q0 4.500 5 4.500t5-4.500v-8M14 20.500h14"/></svg>
              <svg viewBox="0 0 42 24" fill="none" stroke="#333" stroke-width="1.700"><path d="M12 12.500h18M25.500 8.500q0-3-4.500-3t-4.500 3q0 2 2 3M16.500 15q0 3.500 4.500 3.500t4.500-3q0-1.500-1-2.500"/></svg>
              <svg viewBox="0 0 42 24"><path d="M13.500 7.500l9 9M22.500 7.500l-9 9" stroke="#333" stroke-width="2"/><text x="25" y="21" font-size="10" font-weight="700" font-family="Roboto" fill="#333">2</text></svg>
              <svg viewBox="0 0 42 24"><path d="M13.500 7.500l9 9M22.500 7.500l-9 9" stroke="#333" stroke-width="2"/><text x="26" y="10.500" font-size="10" font-weight="700" font-family="Roboto" fill="#333">2</text></svg>
              <svg viewBox="0 0 42 24" style="margin-left:29px" stroke="#333" stroke-width="2"><path d="M12 6h18M18 10h12M18 14h12M12 18h18"/><path d="M12 12l3.500-3v6z" fill="#333" stroke="none"/></svg>
              <svg viewBox="0 0 42 24" stroke="#333" stroke-width="2"><path d="M12 6h18M18 10h12M18 14h12M12 18h18"/><path d="M15.500 12L12 9v6z" fill="#333" stroke="none"/></svg>
            </div>
            <div class="ed-body">This is <b>body</b></div>
            <div class="ed-foot d-flex">Powered by <span class="froala ms-1">Froala</span></div>
          </div>
          <div class="cancel">Cancel</div>

          <div class="picker position-absolute">
            <div class="anchors d-flex position-relative">
              <svg viewBox="-19 -21 38 42" fill="none" stroke="currentColor" stroke-width="1.500"><circle r="8.300"/><path d="M0-6V1M-3 .5h6.500"/></svg>
              <svg viewBox="-19 -21 38 42" fill="none" stroke="currentColor" stroke-width="1.500"><circle r="8.300"/><path d="M-4.500 1.500h9q-.5 4-4.500 4t-4.500-4z"/><circle cx="-3" cy="-2.500" r=".8"/><circle cx="3" cy="-2.500" r=".8"/></svg>
              <svg viewBox="-19 -21 38 42" fill="none" stroke="currentColor" stroke-width="1.400"><path d="M-4-7q4-2 8 0 2.500 4 2 10-2 5-6 5t-6-5q-.5-6 2-10zM-4-7q-4-2-4.500 2 0 4 1.500 6l1-1M4-7q4-2 4.500 2 0 4-1.500 6l-1-1"/><path d="M-2 2h4L0 4zM-3 5.500q3-3 6 0M0 4v4" stroke-width="1.600"/><circle cx="-2.700" cy="-2" r=".6"/><circle cx="2.700" cy="-2" r=".6"/></svg>
              <svg viewBox="-19 -21 38 42" fill="none" stroke="currentColor" stroke-width="1.500"><path d="M0-4q4-1.500 6.500.5 3 3 1.500 7.500-2.500 5-6 4-2-.8-4 0-3.500 1-6-4-1.500-4.500 1.500-7.500Q-4-5.500 0-4zM0-4q0-3-3-4.500M0-5q1-4 5-3-1 3-5 3z"/></svg>
              <svg viewBox="-19 -21 38 42" fill="none" stroke="currentColor" stroke-width="1.400"><circle r="8.300"/><path d="M0-8V8M-8 0H8M-5.500-6q4 6 0 12M5.500-6q-4 6 0 12"/></svg>
              <svg viewBox="-19 -21 38 42" fill="none" stroke="currentColor" stroke-width="1.400"><path d="M-6-2l2-5h8l2 5zM-7-1.500H7l1 2v5H-8v-5zM-7 5.500v2h3v-2M7 5.500v2H4v-2M-2 3h4"/><circle cx="-5" cy="1.800" r="1"/><circle cx="5" cy="1.800" r="1"/></svg>
              <svg viewBox="-19 -21 38 42" fill="none" stroke="currentColor" stroke-width="1.400"><path d="M-3 4V2.500q-3.500-2-3.500-5.500 0-5.300 6.500-5.300T6.500-3q0 3.500-3.500 5.500V4zM-3 6.300h6M-2 8.300h4M-4-3.500l2 3L0-3.500l2 3 2-3"/></svg>
              <svg viewBox="-19 -21 38 42" fill="none" stroke="currentColor" stroke-width="1.600"><path d="M-9-8h7M-9-5h7M-5.500-5v5M4-2v-5l4-1v5M2 8l6-7"/><circle cx="2.800" cy="-2" r="1.300"/><circle cx="7" cy="-3" r="1"/><circle cx="3" cy="2.500" r="1.300"/><circle cx="7.500" cy="7" r="1.300"/><path d="M-2 8l-5-5q-1-2 1-2 2 1 0 2l-2 2q-1 3 2 3 3-1 4-3"/></svg>
              <svg viewBox="-19 -21 38 42" fill="none" stroke="currentColor" stroke-width="1.400"><path d="M-8-9l4 17M-6-8h8l2 9h-8zM2.500-5h4l2 8h-7l-1.500-2"/></svg>
              <div class="bar position-absolute"></div>
            </div>
            <div class="find d-flex align-items-center justify-content-between">Search<svg width="16" height="16" fill="none" stroke="#777" stroke-width="1.300"><circle cx="7" cy="8" r="4.800"/><path d="M10.500 11.500l3.500 3.500"/></svg></div>
            <div class="d-flex justify-content-between">
              <div class="emoji-grid">
                <div class="cat-name">Frequently Used</div>
                <div class="cells">
                  <svg><use href="#e-zany"/></svg><svg><use href="#e-kiss"/></svg><svg><use href="#e-love"/></svg><svg><use href="#e-thumb"/></svg><svg><use href="#e-grin"/></svg><svg><use href="#e-cool"/></svg><svg><use href="#e-joy"/></svg><svg><use href="#e-teeth"/></svg><svg><use href="#e-xd"/></svg>
                  <svg><use href="#e-guitar"/></svg><svg><use href="#e-melon"/></svg><svg><use href="#e-hug"/></svg><svg><use href="#e-yum"/></svg><svg><use href="#e-sweat"/></svg><svg><use href="#e-cow"/></svg><svg><use href="#e-globe"/></svg><svg><use href="#e-rofl"/></svg><svg><use href="#e-cuke"/></svg>
                  <svg><use href="#e-brow"/></svg><svg><use href="#e-monkey"/></svg><svg><use href="#e-cat"/></svg><svg><use href="#e-sad"/></svg><svg><use href="#e-scream"/></svg><svg><use href="#e-desert"/></svg><svg><use href="#e-flag"/></svg><svg><use href="#e-coco"/></svg><svg><use href="#e-spark"/></svg>
                  <svg><use href="#e-smile"/></svg><svg><use href="#e-dog"/></svg><svg><use href="#e-mute"/></svg><svg><use href="#e-berry"/></svg><svg><use href="#e-grim"/></svg><svg><use href="#e-speak"/></svg><svg><use href="#e-blush"/></svg><svg><use href="#e-star"/></svg>
                </div>
                <div class="cat-name">Smileys &amp; People</div>
                <div class="cells">
                  <svg><use href="#e-grin"/></svg><svg><use href="#e-teeth"/></svg><svg><use href="#e-joy"/></svg><svg><use href="#e-rofl"/></svg><svg><use href="#e-grin"/></svg><svg><use href="#e-smile"/></svg><svg><use href="#e-sweat"/></svg><svg><use href="#e-xd"/></svg><svg><use href="#e-wink"/></svg>
                </div>
              </div>
              <div class="vscroll d-flex flex-column align-items-center"><svg width="7" height="4" style="margin:6px 0 5px"><path d="M0 4h7L3.500 0z" fill="#a3a3a3"/></svg><div class="thumb" style="height:30px"></div></div>
            </div>
          </div>
        </div>
      </div>
      <div class="vscroll d-flex flex-column align-items-center"><svg width="7" height="4" style="margin:6px 0 5px"><path d="M0 4h7L3.500 0z" fill="#a3a3a3"/></svg><div class="thumb" style="height:540px"></div><svg width="7" height="4" class="mt-auto" style="margin-bottom:6px"><path d="M0 0h7L3.500 4z" fill="#505050"/></svg></div>
    </div>
  </main>
</div>
<script src="https://cdn.jsdelivr.net/npm/bootstrap@5.3.0/dist/js/bootstrap.bundle.min.js"></script>
</body>
</html>
